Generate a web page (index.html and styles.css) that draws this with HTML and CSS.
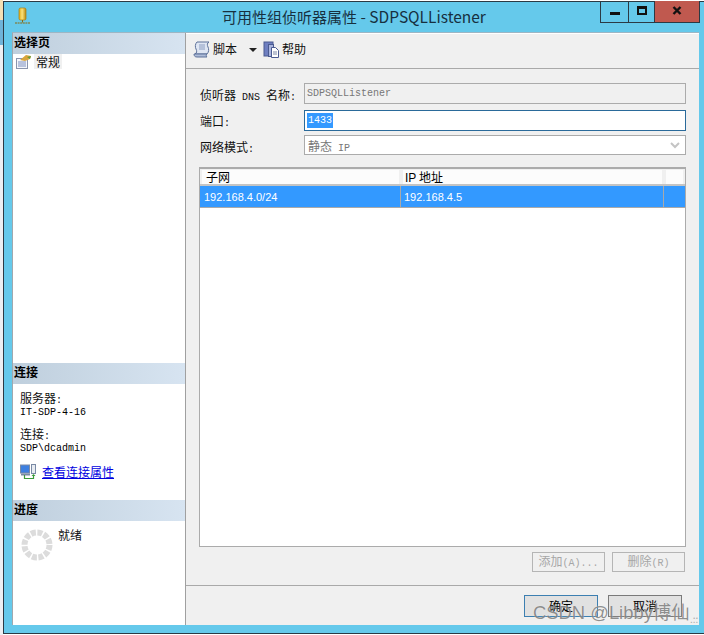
FILE: index.html
```html
<!DOCTYPE html>
<html lang="zh">
<head>
<meta charset="utf-8">
<title>可用性组侦听器属性</title>
<link rel="stylesheet" href="styles.css">
</head>
<body>
<div class="desk">
  <div class="strip"></div>
  <div class="window">
    <header class="titlebar">
      <svg class="app-icon" width="18" height="18" viewBox="0 0 18 18">
        <defs><linearGradient id="g" x1="0" x2="1"><stop offset="0" stop-color="#e0a810"/><stop offset=".45" stop-color="#fbe27a"/><stop offset="1" stop-color="#b98a10"/></linearGradient></defs>
        <rect x="5" y="1" width="7" height="12" rx="1.5" fill="url(#g)" stroke="#a67c10" stroke-width=".7"/>
        <path d="M8.500 13v3M1 16h15" stroke="#8a6a10" stroke-width="1" stroke-dasharray="2 .6"/>
      </svg>
      <div class="title">可用性组侦听器属性<span class="title-latin"> - SDPSQLListener</span></div>
      <div class="controls">
        <div class="ctl ctl-min"><span class="min-glyph"></span></div>
        <div class="ctl ctl-max"><span class="max-glyph"></span></div>
        <div class="ctl ctl-close">
          <svg width="10" height="9" viewBox="0 0 10 9"><path d="M1.500 1l7 7M8.500 1l-7 7" stroke="#111" stroke-width="2.400"/></svg>
        </div>
      </div>
    </header>
    <div class="client">
      <aside class="side">
        <h2 class="sec-head">选择页</h2>
        <div class="pages">
          <div class="page-item">
            <svg width="16" height="15" viewBox="0 0 16 15">
              <rect x=".5" y="4.500" width="11" height="10" fill="#f4f6fb" stroke="#8a94ad"/>
              <path d="M2 8h8M2 10h8M2 12h8" stroke="#7d8fc0"/>
              <path d="M4 6l6-5 5 1-1 3-5 2z" fill="#d9a53a"/>
              <path d="M11 3l4-1-1 3z" fill="#5f9a3b"/>
            </svg>
            <span class="page-name">常规</span>
          </div>
        </div>
        <h2 class="sec-head">连接</h2>
        <div class="conn">
          <div class="kv"><span class="k">服务器<span class="mono">:</span></span><span class="v">IT-SDP-4-16</span></div>
          <div class="kv"><span class="k">连接<span class="mono">:</span></span><span class="v">SDP\dcadmin</span></div>
          <div class="conn-link">
            <svg width="17" height="16" viewBox="0 0 17 16">
              <rect x=".5" y="1" width="9" height="8" fill="#3d7fe0" stroke="#7a8aa5"/>
              <rect x="11.500" y=".5" width="4" height="9" fill="#e8ecf2" stroke="#7a8aa5"/>
              <path d="M1 10.500h9" stroke="#7a8aa5" stroke-width="2"/>
              <path d="M4.500 11v3.500h9V11" fill="none" stroke="#3a9a3a" stroke-width="1.200"/>
              <path d="M11.500 12l2-2 2 2z" fill="#3a9a3a"/>
            </svg>
            <a class="link" href="#">查看连接属性</a>
          </div>
        </div>
        <h2 class="sec-head">进度</h2>
        <div class="progress">
          <svg class="spinner" width="32" height="32" viewBox="0 0 32 32">
            <circle cx="16" cy="16" r="12.500" fill="none" stroke="#dcdcdc" stroke-width="6" stroke-dasharray="5 1.545"/>
          </svg>
          <span class="ready">就绪</span>
        </div>
      </aside>
      <main class="main">
        <div class="toolbar">
          <svg width="18" height="17" viewBox="0 0 18 17">
            <path d="M4 1h12c-2 1-2 3-1 5s1 5-1 7H2c2-1 2-3 1-5S2 3 4 1z" fill="#dfe6f3" stroke="#5d7199"/>
            <path d="M1 13c0 2 1 3 3 3h10c-1-1-1-2 0-3z" fill="#aebcd8" stroke="#5d7199"/>
            <path d="M6 4h6M6 6h6M6 8h6" stroke="#8a9cc0"/>
          </svg>
          <span class="tool-label">脚本</span>
          <span class="caret"></span>
          <svg class="help-icon" width="17" height="17" viewBox="0 0 17 17">
            <rect x="1" y="1" width="9" height="14" fill="#6f7fc0" stroke="#4a5a90"/>
            <rect x="5.500" y="3.500" width="5" height="12" fill="#aab5de" stroke="#4a5a90"/>
            <path d="M8.500 6.500h4l3 3v7h-7z" fill="#fff" stroke="#4a5a90"/>
            <path d="M10 11h4M10 13h4" stroke="#7a86a5"/>
          </svg>
          <span class="tool-label">帮助</span>
        </div>
        <div class="content">
          <div class="form">
            <label class="lbl">侦听器<span class="mono"> DNS </span>名称<span class="mono">:</span></label>
            <div class="field field-dis mono">SDPSQLListener</div>
            <label class="lbl lbl-tight">端口<span class="mono">:</span></label>
            <div class="field field-on mono"><span class="sel">1433</span></div>
            <label class="lbl">网络模式<span class="mono">:</span></label>
            <div class="field field-sel">
              <span>静态<span class="mono"> IP</span></span>
              <svg width="10" height="7" viewBox="0 0 10 7"><path d="M1 1l4 4 4-4" fill="none" stroke="#c4c4c4" stroke-width="2"/></svg>
            </div>
          </div>
          <div class="table">
            <div class="row thead">
              <div class="cell c1"><span class="th">子网</span></div>
              <div class="cell c2"><span class="th"><span class="sans">IP</span> 地址</span></div>
              <div class="cell c3"><span class="th"></span></div>
            </div>
            <div class="row tbody">
              <div class="cell c1">192.168.4.0/24</div>
              <div class="cell c2">192.168.4.5</div>
              <div class="cell c3"></div>
            </div>
          </div>
          <div class="tbl-actions">
            <button class="btn-dis">添加<span class="mono">(A)...</span></button>
            <button class="btn-dis">删除<span class="mono">(R)</span></button>
          </div>
        </div>
        <footer class="footer">
          <button class="btn btn-def">确定</button>
          <button class="btn">取消</button>
        </footer>
      </main>
    </div>
  </div>
  <div class="watermark">CSDN @Libby博仙</div>
  <div class="grip">.::</div>
</div>
</body>
</html>
```

FILE: styles.css
```css
* { box-sizing: border-box; }
html, body { margin: 0; padding: 0; }
body {
  width: 704px;
  height: 635px;
  overflow: hidden;
  background: #fff;
  font-family: "Noto Sans CJK SC", "Liberation Sans", sans-serif;
  font-size: 12px;
  color: #111;
}
.desk {
  position: relative;
  display: flex;
  width: 704px;
  height: 635px;
  overflow: hidden;
}
.strip {
  width: 3px;
  height: 635px;
  flex: none;
  background: linear-gradient(#f4dfb4 0 20px, #6fb3d8 20px 45px, #eceff2 45px 635px);
}
.window {
  flex: none;
  width: 701px;
  height: 633px;
  margin-top: 1px;
  display: flex;
  flex-direction: column;
  padding: 0 5px 8px 8px;
  background: #65c9eb;
  border-left: 1px solid #2b3a44;
  border-top: 1px solid #2b3a44;
  border-bottom: 1px solid #2b3a44;
}
.titlebar {
  height: 30px;
  flex: none;
  display: flex;
  align-items: flex-start;
  position: relative;
}
.app-icon { margin: 5px 0 0 2px; }
.title {
  position: absolute;
  left: 210px;
  top: 4px;
  font-size: 15px;
  line-height: 20px;
  color: #17303f;
  white-space: nowrap;
}
.title-latin { font-size: 15.500px; }
.controls {
  position: absolute;
  right: -1px;
  top: -1px;
  display: flex;
  height: 22px;
  border: 1px solid #2b3a44;
  border-top: 0;
}
.ctl {
  display: flex;
  align-items: center;
  justify-content: center;
  height: 100%;
}
.ctl-min { width: 28px; border-right: 1px solid #2b3a44; padding-top: 3px; }
.ctl-max { width: 26px; border-right: 1px solid #2b3a44; padding-bottom: 2px; }
.ctl-close { width: 44px; background: #c0594f; padding-bottom: 3px; }
.min-glyph { width: 10px; height: 3px; background: #111; }
.max-glyph { width: 10px; height: 9px; border: 2px solid #111; border-top-width: 3px; }
.client {
  flex: 1;
  display: flex;
  min-height: 0;
  border-top: 1px solid #9db6c4;
  border-left: 1px solid #a0a8ae;
}
.side {
  width: 173px;
  flex: none;
  display: flex;
  flex-direction: column;
  background: #fff;
  border-right: 1px solid #a0a0a0;
}
.sec-head {
  margin: 0;
  height: 21px;
  flex: none;
  padding-left: 1px;
  font-size: 12px;
  line-height: 18px;
  font-weight: 700;
  color: #000;
  background: linear-gradient(90deg, #bfcfdd, #d7e4f1);
}
.pages { flex: 1; padding: 0 0 0 3px; }
.page-item { display: flex; align-items: center; gap: 2px; height: 15px; }
.page-name { background: #f0f0f0; padding: 0 2px; line-height: 15px; height: 15px; }
.conn { height: 116px; flex: none; padding: 7px 0 0 7px; }
.kv { display: flex; flex-direction: column; margin-bottom: 10px; }
.k { line-height: 14px; }
.v, .mono { font-family: "Liberation Mono", monospace; font-size: 10px; white-space: pre; }
.v { line-height: 9px; color: #000; }
.conn-link { display: flex; align-items: center; gap: 5px; height: 18px; }
.link { color: #0000e0; text-decoration: underline; line-height: 14px; }
.progress {
  flex: none;
  height: 104px;
  display: flex;
  align-items: flex-start;
  padding: 8px 0 0 8px;
  gap: 5px;
}
.ready { margin-top: -2px; line-height: 16px; }
.main {
  flex: 1;
  min-width: 0;
  display: flex;
  flex-direction: column;
  background: #f0f0f0;
  border-top: 1px solid #fff;
}
.toolbar {
  height: 35px;
  flex: none;
  display: flex;
  align-items: center;
  padding: 0 0 4px 7px;
  border-bottom: 1px solid #a9a9a9;
}
.tool-label { margin-left: 2px; line-height: 16px; }
.caret {
  width: 0;
  height: 0;
  margin: 1px 0 0 12px;
  border: 4px solid transparent;
  border-top: 4px solid #222;
  border-bottom: 0;
}
.help-icon { margin-left: 6px; }
.content {
  flex: 1;
  min-height: 0;
  padding: 14px 13px 0 13px;
  display: flex;
  flex-direction: column;
}
.form {
  display: grid;
  grid-template-columns: 104px 382px;
  grid-template-rows: 27px 25px 20px;
  align-items: start;
  margin-left: 1px;
}
.lbl { line-height: 23px; white-space: nowrap; color: #111; }
.lbl-tight { line-height: 21px; }
.field {
  height: 21px;
  padding-left: 2px;
  display: flex;
  align-items: center;
  border: 1px solid #ababab;
  color: #777;
  background: #fff;
}
.field-dis { background: #f0f0f0; }
.field-on { border-color: #2a6a9a; color: #fff; padding-left: 2px; }
.sel { background: #3399ff; line-height: 15px; padding: 0 1px; }
.field-sel { height: 20px; justify-content: space-between; padding: 0 5px 0 3px; }
.table {
  flex: none;
  width: 487px;
  height: 380px;
  margin-top: 12px;
  background: #fff;
  border: 1px solid #ababab;
  border-top-width: 2px;
}
.row { display: flex; }
.thead { height: 17px; padding-top: 1px; background: #f0f0f0; border-bottom: 2px solid #c4c4c4; }
.thead .cell { padding: 0 2px; border-right: 0; }
.th {
  display: block;
  height: 14px;
  padding-left: 4px;
  line-height: 13px;
  background: #fcfcfc;
  color: #000;
}
.thead .c2 .th { padding-left: 2px; }
.sans { font-family: "Liberation Sans", sans-serif; }
.tbody {
  height: 22px;
  color: #fff;
  background: #3399ff;
  border-bottom: 1px solid #a9a9a9;
  font-family: "Liberation Sans", sans-serif;
  font-size: 11px;
  line-height: 23px;
}
.cell { flex: none; }
.c1 { width: 201px; }
.c2 { width: 263px; }
.c3 { flex: 1; }
.tbody .cell { padding-left: 4px; }
.tbody .c2 { padding-left: 3px; }
.tbody .c1, .tbody .c2 { border-right: 1px solid #a9a9a9; }
.tbl-actions {
  display: flex;
  justify-content: flex-end;
  gap: 7px;
  padding: 5px 1px 0 0;
}
.btn-dis {
  width: 73px;
  height: 20px;
  padding: 0;
  font: inherit;
  line-height: 16px;
  color: #a6a6a6;
  background: #f0f0f0;
  border: 1px solid #b5b5b5;
}
.footer {
  height: 40px;
  flex: none;
  display: flex;
  gap: 10px;
  padding: 9px 16px 0 338px;
  border-top: 1px solid #a9a9a9;
}
.btn {
  width: 74px;
  height: 22px;
  padding: 0;
  font: inherit;
  line-height: 16px;
  color: #000;
  background: #e1e1e1;
  border: 1px solid #7a7a7a;
}
.btn-def { border-color: #3c7fb1; }
.watermark {
  position: absolute;
  left: 533px;
  top: 601px;
  font-family: "Liberation Sans", "Noto Sans CJK SC", sans-serif;
  font-size: 18.400px;
  line-height: 24px;
  white-space: nowrap;
  color: rgba(95, 95, 95, .7);
  text-shadow: 0 0 1px rgba(255, 255, 255, .7);
}
.grip {
  position: absolute;
  left: 690px;
  top: 613px;
  font-size: 10px;
  line-height: 12px;
  color: #aaa;
}
```
